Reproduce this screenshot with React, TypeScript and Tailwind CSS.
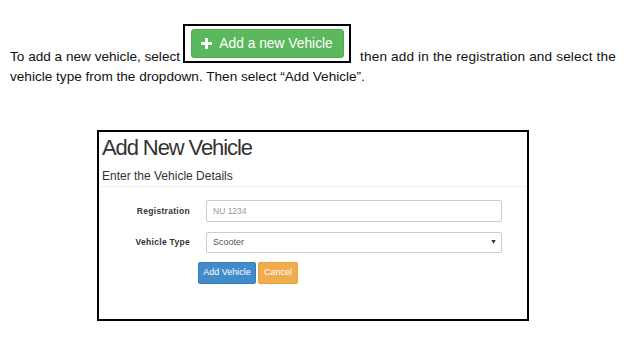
import React from "react";

export default function App() {
  return (
    <div className="w-[632px] h-[349px] bg-white overflow-hidden font-['Liberation_Sans',Arial,sans-serif] text-black">
      <div className="pt-[24px] pl-[10px] text-[13.6px] leading-[20px] text-[#111]">
        <div className="flex items-end whitespace-nowrap">
          <span>To add a new vehicle, select</span>
          <div className="ml-[3px] mb-[4px] w-[168px] h-[39px] border-2 border-black flex items-center justify-center">
            <div className="w-[153px] h-[29px] rounded-[3px] bg-[#5cb85c] border border-[#4cae4c] flex items-center justify-center gap-[7px] text-white text-[13.8px]">
              <svg width="11" height="11" viewBox="0 0 11 11">
                <path d="M4 0h3v4h4v3H7v4H4V7H0V4h4z" fill="#fff" />
              </svg>
              <span>Add a new Vehicle</span>
            </div>
          </div>
          <span className="ml-[9px] tracking-[0.15px]">then add in the registration and select the</span>
        </div>
        <div>vehicle type from the dropdown. Then select “Add Vehicle”.</div>
      </div>

      <div className="ml-[97px] mt-[43px] w-[432px] h-[191px] border-2 border-black font-['Liberation_Sans',Arial,sans-serif]">
        <div className="pl-[3px] pt-[3px] text-[22px] leading-[26px] tracking-[-1.1px] text-[#333]">
          Add New Vehicle
        </div>
        <div className="ml-[2px] mt-[7px] pl-[1px] pb-[2px] text-[12px] leading-[16px] text-[#333] border-b border-[#eee]">
          Enter the Vehicle Details
        </div>
        <div className="mt-[13px] flex flex-col gap-[10px]">
          <div className="flex items-center">
            <div className="w-[91px] text-right text-[8.5px] font-bold text-[#333] tracking-[0.3px]">Registration</div>
            <div className="ml-[16px] w-[296px] h-[22px] border border-[#ccc] rounded-[2px] flex items-center pl-[6px] text-[8.5px] text-[#999]">
              NU 1234
            </div>
          </div>
          <div className="flex items-center">
            <div className="w-[91px] text-right text-[8.5px] font-bold text-[#333] tracking-[0.3px]">Vehicle Type</div>
            <div className="ml-[16px] w-[296px] h-[21px] border border-[#ccc] rounded-[2px] flex items-center justify-between pl-[6px] pr-[4px] text-[9px] text-[#555]">
              <span>Scooter</span>
              <span className="text-[7px] text-[#333]">▼</span>
            </div>
          </div>
        </div>
        <div className="mt-[9px] ml-[99px] flex gap-[2px]">
          <div className="w-[58px] h-[22px] rounded-[2px] bg-[#428bca] border border-[#357ebd] flex items-center justify-center text-white text-[9px]">
            Add Vehicle
          </div>
          <div className="w-[40px] h-[22px] rounded-[2px] bg-[#f0ad4e] border border-[#eea236] flex items-center justify-center text-white text-[9px]">
            Cancel
          </div>
        </div>
      </div>
    </div>
  );
}
